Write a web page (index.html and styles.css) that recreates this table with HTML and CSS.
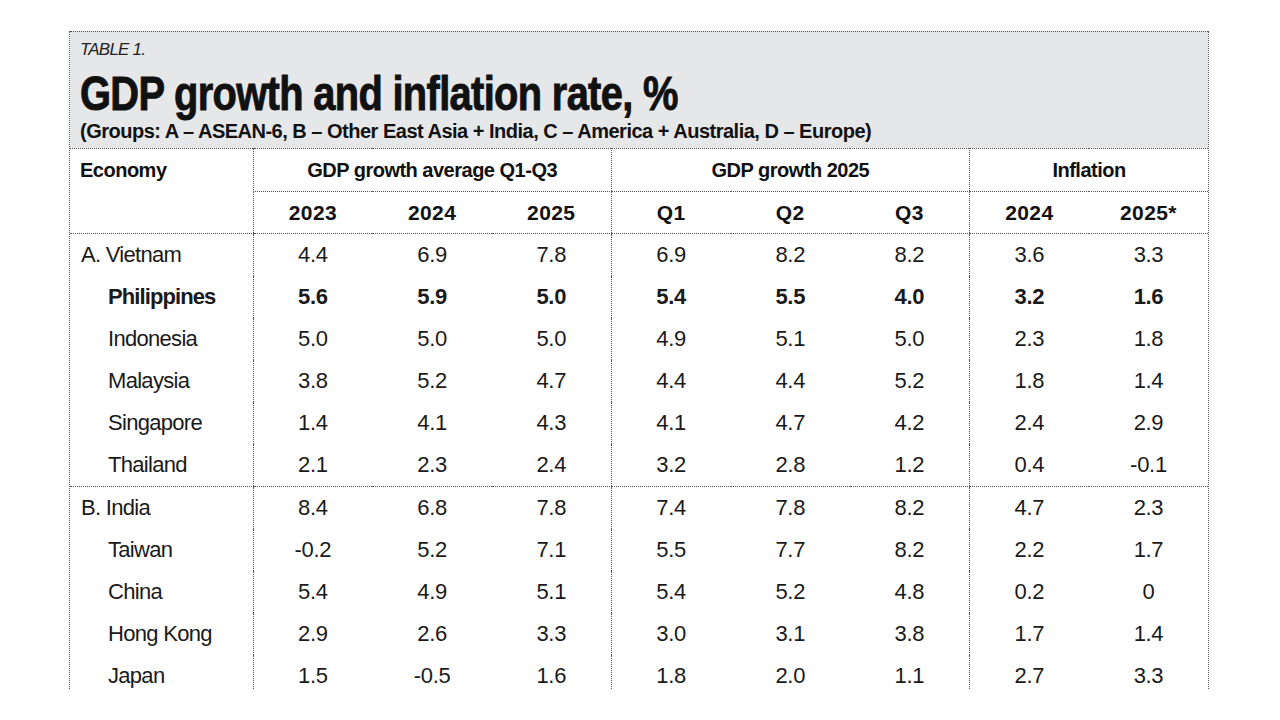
FILE: index.html
```html
<!DOCTYPE html>
<html lang="en">
<head>
<meta charset="utf-8">
<title>GDP growth and inflation rate</title>
<link rel="stylesheet" href="styles.css">
</head>
<body>
<div class="frame">
  <header class="head">
    <div class="kicker">TABLE 1.</div>
    <h1 class="title"><span class="title-text">GDP growth and inflation rate, %</span></h1>
    <div class="sub">(Groups: A – ASEAN-6, B – Other East Asia + India, C – America + Australia, D – Europe)</div>
  </header>
  <table class="data">
    <colgroup>
      <col class="c-name">
      <col class="c-num"><col class="c-num"><col class="c-num">
      <col class="c-num"><col class="c-num"><col class="c-num">
      <col class="c-num"><col class="c-num">
    </colgroup>
    <thead>
      <tr class="grp">
        <th class="name" rowspan="2">Economy</th>
        <th colspan="3" class="sep">GDP growth average Q1-Q3</th>
        <th colspan="3" class="sep">GDP growth 2025</th>
        <th colspan="2" class="sep">Inflation</th>
      </tr>
      <tr class="yrs">
        <th class="sep">2023</th><th>2024</th><th>2025</th>
        <th class="sep">Q1</th><th>Q2</th><th>Q3</th>
        <th class="sep">2024</th><th>2025*</th>
      </tr>
    </thead>
    <tbody class="grpA">
      <tr><td class="name">A. Vietnam</td><td class="sep">4.4</td><td>6.9</td><td>7.8</td><td class="sep">6.9</td><td>8.2</td><td>8.2</td><td class="sep">3.6</td><td>3.3</td></tr>
      <tr class="hl"><td class="name sub-item">Philippines</td><td class="sep">5.6</td><td>5.9</td><td>5.0</td><td class="sep">5.4</td><td>5.5</td><td>4.0</td><td class="sep">3.2</td><td>1.6</td></tr>
      <tr><td class="name sub-item">Indonesia</td><td class="sep">5.0</td><td>5.0</td><td>5.0</td><td class="sep">4.9</td><td>5.1</td><td>5.0</td><td class="sep">2.3</td><td>1.8</td></tr>
      <tr><td class="name sub-item">Malaysia</td><td class="sep">3.8</td><td>5.2</td><td>4.7</td><td class="sep">4.4</td><td>4.4</td><td>5.2</td><td class="sep">1.8</td><td>1.4</td></tr>
      <tr><td class="name sub-item">Singapore</td><td class="sep">1.4</td><td>4.1</td><td>4.3</td><td class="sep">4.1</td><td>4.7</td><td>4.2</td><td class="sep">2.4</td><td>2.9</td></tr>
      <tr><td class="name sub-item">Thailand</td><td class="sep">2.1</td><td>2.3</td><td>2.4</td><td class="sep">3.2</td><td>2.8</td><td>1.2</td><td class="sep">0.4</td><td>-0.1</td></tr>
    </tbody>
    <tbody class="grpB">
      <tr><td class="name">B. India</td><td class="sep">8.4</td><td>6.8</td><td>7.8</td><td class="sep">7.4</td><td>7.8</td><td>8.2</td><td class="sep">4.7</td><td>2.3</td></tr>
      <tr><td class="name sub-item">Taiwan</td><td class="sep">-0.2</td><td>5.2</td><td>7.1</td><td class="sep">5.5</td><td>7.7</td><td>8.2</td><td class="sep">2.2</td><td>1.7</td></tr>
      <tr><td class="name sub-item">China</td><td class="sep">5.4</td><td>4.9</td><td>5.1</td><td class="sep">5.4</td><td>5.2</td><td>4.8</td><td class="sep">0.2</td><td>0</td></tr>
      <tr><td class="name sub-item">Hong Kong</td><td class="sep">2.9</td><td>2.6</td><td>3.3</td><td class="sep">3.0</td><td>3.1</td><td>3.8</td><td class="sep">1.7</td><td>1.4</td></tr>
      <tr class="last"><td class="name sub-item">Japan</td><td class="sep">1.5</td><td>-0.5</td><td>1.6</td><td class="sep">1.8</td><td>2.0</td><td>1.1</td><td class="sep">2.7</td><td>3.3</td></tr>
    </tbody>
  </table>
</div>
</body>
</html>
```

FILE: styles.css
```css
html, body {
  margin: 0;
  padding: 0;
  background: #ffffff;
}

body {
  font-family: "Liberation Sans", Arial, sans-serif;
  color: #161616;
}

.frame {
  width: 1140px;
  margin: 31px 0 0 69px;
  height: 658px;
  overflow: hidden;
  border-left: 1px dotted #555;
  border-right: 1px dotted #555;
  box-sizing: border-box;
}

.head {
  background: #e6e7e9;
  border-top: 1px dotted #555;
  height: 117px;
  box-sizing: border-box;
  padding: 9px 0 0 10px;
}

.kicker {
  font-style: italic;
  font-size: 17px;
  line-height: 18px;
  color: #222;
  letter-spacing: -0.8px;
}

.title {
  margin: 9px 0 0;
  font-size: 48px;
  line-height: 52px;
  font-weight: 700;
  color: #111;
  white-space: nowrap;
}

.title-text {
  display: inline-block;
  letter-spacing: -0.8px;
  -webkit-text-stroke: 0.9px #111;
  transform: scaleX(0.83);
  transform-origin: left center;
}

.sub {
  font-size: 20px;
  line-height: 22px;
  font-weight: 700;
  color: #111;
  letter-spacing: -0.5px;
  white-space: nowrap;
}

.data {
  width: 1138px;
  border-collapse: collapse;
  table-layout: fixed;
  border-top: 1px dotted #555;
}

.c-name { width: 183px; }
.c-num { width: 119.4px; }

.data th {
  font-weight: 700;
  font-size: 20px;
  letter-spacing: -0.5px;
  padding: 0;
  text-align: center;
  color: #111;
}

.data .grp th { height: 42px; }

.data .yrs th {
  height: 41px;
  font-size: 21px;
  letter-spacing: 0.4px;
  border-bottom: 1px dotted #555;
}

.data .grp th.sep {
  border-bottom: 1px dotted #555;
}

.data .grp th.name {
  text-align: left;
  vertical-align: top;
  padding: 10px 0 0 10px;
  border-bottom: 1px dotted #555;
}

.data .sep { border-left: 1px dotted #555; }

.data td {
  font-size: 22px;
  height: 42px;
  padding: 0;
  text-align: center;
  color: #1a1a1a;
  letter-spacing: -0.3px;
}

.data td.name {
  text-align: left;
  padding-left: 11px;
  letter-spacing: -0.7px;
}

.data td.sub-item { padding-left: 38px; }

.data tr.hl td { font-weight: 700; }

.data tr.hl td.name { letter-spacing: -0.9px; }

.grpA tr:last-child td { border-bottom: 1px dotted #555; }
```
